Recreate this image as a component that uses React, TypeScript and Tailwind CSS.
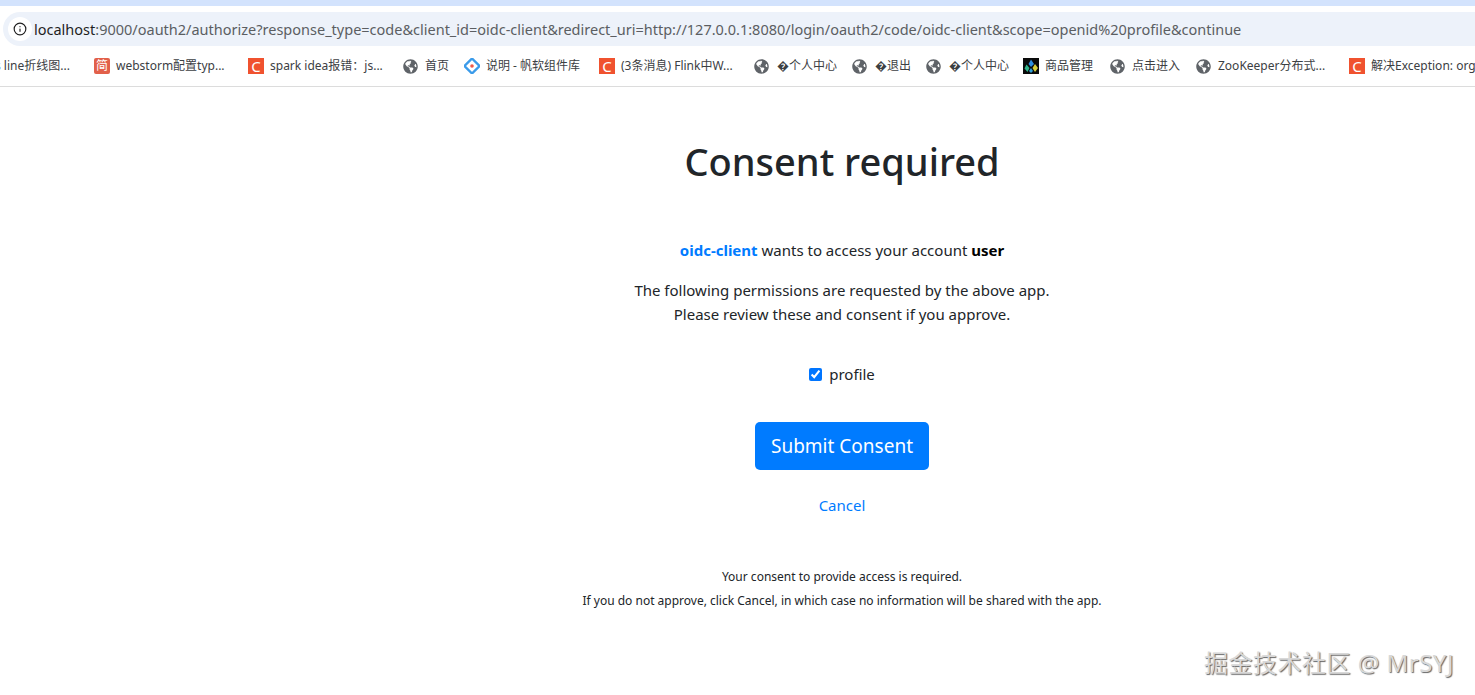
import { Info } from "lucide-react";
import { FaGlobeAmericas } from "react-icons/fa";

const uiFont = { fontFamily: '"Noto Sans", "Noto Sans CJK SC", sans-serif' };

function CsdnIcon() {
  return (
    <span className="flex h-4 w-4 shrink-0 items-center justify-center bg-[#f0522f] text-[15px] leading-none text-white">
      C
    </span>
  );
}

function JianshuIcon() {
  return (
    <span className="flex h-4 w-4 shrink-0 items-center justify-center rounded-[2px] bg-[#e2604a] text-[12px] leading-none text-white">
      简
    </span>
  );
}

function GlobeIcon() {
  return <FaGlobeAmericas className="h-[15px] w-[15px] shrink-0 text-[#5f6368]" />;
}

function DiamondIcon() {
  return (
    <svg viewBox="0 0 16 16" className="h-4 w-4 shrink-0">
      <path d="M8 0.5 L15.5 8 L8 15.5 L0.5 8 Z" fill="none" stroke="#3b9bea" strokeWidth="2.4" />
      <circle cx="8" cy="8" r="1.8" fill="#f05a4a" />
    </svg>
  );
}

function MosaicIcon() {
  return (
    <svg viewBox="0 0 16 16" className="h-4 w-4 shrink-0">
      <rect width="16" height="16" fill="#0a0a0a" />
      <path d="M8 1.5 L11 6 L8 9 L5.5 6 Z" fill="#2f8fe0" />
      <path d="M3.5 6.5 L6.5 10 L4.5 14 L1.5 10.5 Z" fill="#2fb58a" />
      <path d="M12 6 L15 10 L12 14 L9.5 10 Z" fill="#d8cf3a" />
      <path d="M8 10 L10 13 L8 15 L6 13 Z" fill="#2f9fd8" />
    </svg>
  );
}

const bookmarks = [
  { icon: <JianshuIcon />, label: "webstorm配置typ...", width: "w-[154px]" },
  { icon: <CsdnIcon />, label: "spark idea报错：js...", width: "w-[155px]" },
  { icon: <GlobeIcon />, label: "首页", width: "w-[61px]", gap: "gap-[7px]" },
  { icon: <DiamondIcon />, label: "说明 - 帆软组件库", width: "w-[135px]" },
  { icon: <CsdnIcon />, label: "(3条消息) Flink中W...", width: "w-[155px]" },
  { icon: <GlobeIcon />, label: "�个人中心", width: "w-[98px]", gap: "gap-2" },
  { icon: <GlobeIcon />, label: "�退出", width: "w-[74px]", gap: "gap-2" },
  { icon: <GlobeIcon />, label: "�个人中心", width: "w-[97px]", gap: "gap-2" },
  { icon: <MosaicIcon />, label: "商品管理", width: "w-[87px]" },
  { icon: <GlobeIcon />, label: "点击进入", width: "w-[86px]", gap: "gap-[7px]" },
  { icon: <GlobeIcon />, label: "ZooKeeper分布式...", width: "w-[153px]", gap: "gap-[7px]" },
  { icon: <CsdnIcon />, label: "解决Exception: org.apache", width: "w-[200px]" },
];

function BrowserChrome() {
  return (
    <header className="border-b border-[#dcdcdc]">
      <div className="h-[6px] bg-[#d3e3fd]" />
      <div className="pl-[3px] pt-[6px]">
        <div className="flex h-[34px] items-center rounded-l-[17px] bg-[#edf2fa]">
          <span className="ml-[5px] flex h-[24px] w-[24px] items-center justify-center rounded-full bg-white">
            <Info size={14} strokeWidth={2} className="text-[#1f1f1f]" />
          </span>
          <span className="ml-[2px] whitespace-nowrap text-[14.5px] leading-none text-[#5b5e62]">
            <span className="text-[#1f1f1f]">localhost</span>
            :9000/oauth2/authorize?response_type=code&amp;client_id=oidc-client&amp;redirect_uri=http://127.0.0.1:8080/login/oauth2/code/oidc-client&amp;scope=openid%20profile&amp;continue
          </span>
        </div>
      </div>
      <nav className="flex h-[40px] items-center overflow-hidden whitespace-nowrap text-[12px] text-[#3c4043]">
        <div className="w-[94px] shrink-0 overflow-hidden">
          <span className="ml-[-5px] block">s line折线图...</span>
        </div>
        {bookmarks.map((item, i) => (
          <div key={i} className={`flex shrink-0 items-center ${item.gap ?? "gap-[6px]"} ${item.width}`}>
            {item.icon}
            <span>{item.label}</span>
          </div>
        ))}
      </nav>
    </header>
  );
}

function ConsentForm() {
  return (
    <main className="flex flex-col items-center pl-[209px] text-[15px] text-[#212529]">
      <h1 className="mt-[50px] text-[38px] font-medium leading-[48px]">Consent required</h1>
      <p className="mt-[53px] leading-6">
        <b className="font-bold text-[#007bff]">oidc-client</b> wants to access your account <b className="font-bold text-black">user</b>
      </p>
      <p className="mt-[16px] text-center leading-6">
        The following permissions are requested by the above app.
        <br />
        Please review these and consent if you approve.
      </p>
      <label className="mt-[36px] flex items-center gap-[7px] leading-6">
        <input type="checkbox" defaultChecked className="h-[13px] w-[13px] accent-[#0075ff]" />
        profile
      </label>
      <button className="mt-[36px] h-[48px] w-[174px] rounded-[5px] bg-[#007bff] text-[19px] text-white">
        Submit Consent
      </button>
      <a className="mt-[23px] leading-6 text-[#007bff]">Cancel</a>
      <p className="mt-[48px] text-center text-[12px] leading-6">
        Your consent to provide access is required.
        <br />
        If you do not approve, click Cancel, in which case no information will be shared with the app.
      </p>
    </main>
  );
}

export default function App() {
  return (
    <div className="relative h-[695px] overflow-hidden bg-white" style={uiFont}>
      <BrowserChrome />
      <ConsentForm />
      <div className="absolute bottom-[20px] right-[21px] text-[24px] leading-none tracking-[0.5px] text-[#d8d8d8] [text-shadow:1px_1px_1px_#666]">
        掘金技术社区 @ MrSYJ
      </div>
    </div>
  );
}
